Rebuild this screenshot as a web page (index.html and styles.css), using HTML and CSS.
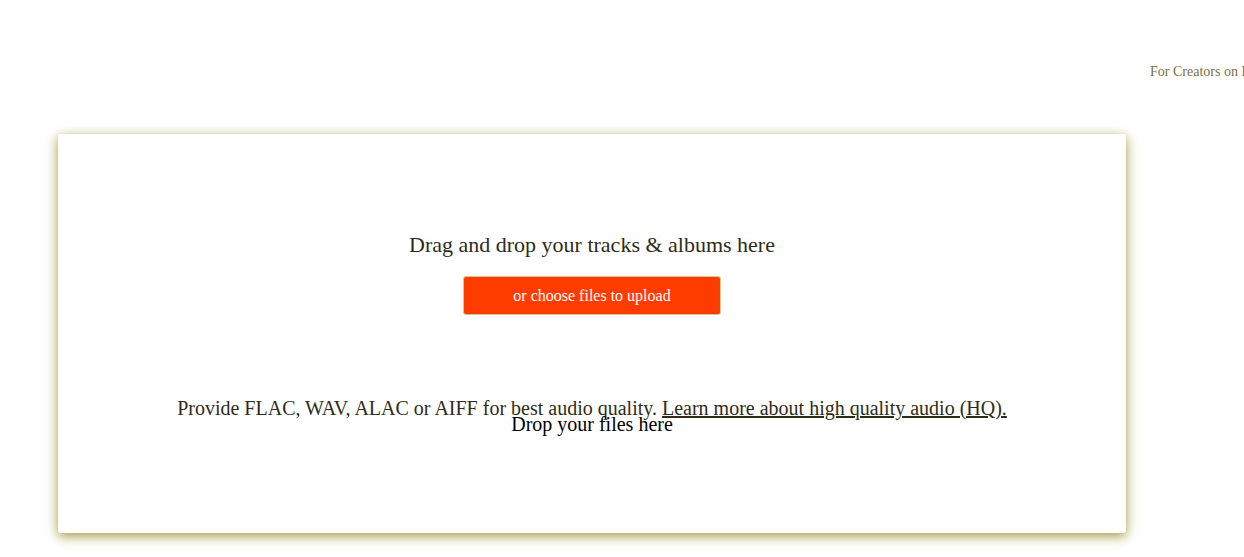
FILE: index.html
```html
<!DOCTYPE html>
<html>
<head>
<meta charset="utf-8">
<link rel="stylesheet" href="styles.css">
</head>
<body>
<header class="top">
  <a class="creators" href="#">For Creators on Bandcamp</a>
</header>
<main class="dropzone">
  <p class="drag-title">Drag and drop your tracks &amp; albums here</p>
  <button class="choose-btn">or choose files to upload</button>
  <p class="hint">Provide FLAC, WAV, ALAC or AIFF for best audio quality. <a href="#">Learn more about high quality audio (HQ).</a></p>
  <div class="drop-label">Drop your files here</div>
</main>
</body>
</html>
```
FILE: styles.css
```css
html {
  overflow: hidden;
  background: #ffffff;
}
body {
  margin: 0;
  padding: 0 0 24px;
  font-family: "Liberation Serif", "Times New Roman", serif;
}
.top {
  height: 134px;
  padding-left: 1150px;
  box-sizing: border-box;
  white-space: nowrap;
}
.creators {
  display: inline-block;
  margin-top: 64px;
  font-size: 14px;
  line-height: 16px;
  color: #77713f;
  text-decoration: none;
}
.dropzone {
  position: relative;
  margin-left: 58px;
  width: 1068px;
  height: 399px;
  box-sizing: border-box;
  border-radius: 3px;
  background: #fff;
  box-shadow: 0 3px 12px rgba(140, 135, 25, 0.85);
  display: flex;
  flex-direction: column;
  align-items: center;
  padding-top: 98px;
}
.drag-title {
  margin: 0;
  font-size: 22px;
  line-height: 26px;
  color: #2e2b17;
}
.choose-btn {
  margin-top: 18px;
  width: 258px;
  height: 39px;
  border: 1px solid #d3c79a;
  border-radius: 3px;
  background: #ff3c00;
  color: #fff;
  font-family: "Liberation Serif", "Times New Roman", serif;
  font-size: 16px;
  padding: 0;
}
.hint {
  margin: 82px 0 0;
  font-size: 20px;
  line-height: 23px;
  color: #2e2b17;
}
.hint a {
  color: #2e2b17;
}
.drop-label {
  position: absolute;
  left: 0;
  right: 0;
  top: 279px;
  text-align: center;
  font-size: 20px;
  line-height: 23px;
  color: #000;
}
```
